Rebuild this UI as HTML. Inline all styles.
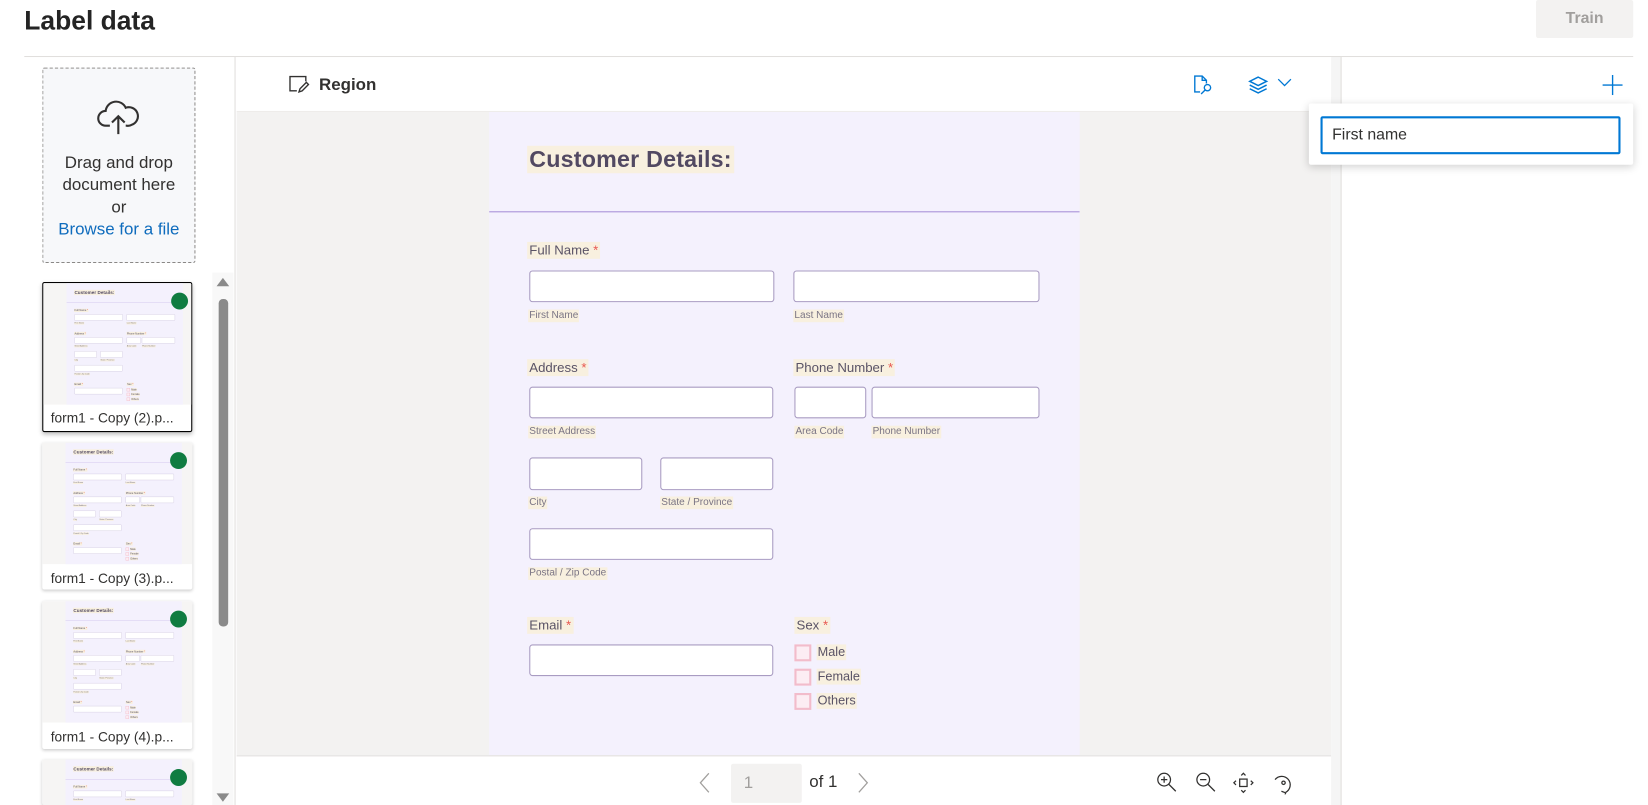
<!DOCTYPE html>
<html><head><meta charset="utf-8"><style>
*{box-sizing:border-box;margin:0;padding:0}
html,body{width:1648px;height:805px;overflow:hidden;background:#fff;font-family:"Liberation Sans",sans-serif;color:#323130}
#w{position:absolute;left:0;top:0;width:1560px;height:762px;transform:scale(1.0564);transform-origin:0 0;overflow:hidden}
.a{position:absolute}
.form{position:absolute;width:559px;height:609px;background:#f4f1fd;overflow:hidden}
.form .t{position:absolute;left:36px;top:32px;font-size:22px;font-weight:bold;color:#524962;background:#f8f0df;padding:0 2px;letter-spacing:.2px}
.form .ln{position:absolute;left:0;right:0;top:94px;height:1px;background:#a78fd8}
.form .lb{position:absolute;font-size:12.5px;color:#5a5366;background:#f8f0df;padding:0 2px;line-height:16px}
.form .lb b{color:#e8554e;font-weight:normal}
.form .sl{position:absolute;font-size:9.5px;color:#7a7484;background:#f8f0df;padding:0 1px;line-height:12px}
.form .in{position:absolute;background:#fff;border:1px solid #a99cc2;border-radius:3px}
.form .cb{position:absolute;width:16px;height:16px;border:2px solid #f2bccb;background:#fcedf3}
.form .cl{position:absolute;font-size:12px;color:#5a5366;background:#f8f0df;line-height:15px;padding:0 1px}
.card{position:absolute;left:40px;width:142px;background:#fff;border-radius:2px;box-shadow:0 1px 3px rgba(0,0,0,.2);overflow:hidden}
.card .img{position:absolute;left:0;top:0;width:142px;height:115px;background:#f6f5f4;overflow:hidden}
.card .mp{position:absolute;left:22px;top:0;width:559px;height:609px;transform:scale(.197);transform-origin:0 0}
.card .dot{position:absolute;left:121px;top:9px;width:16px;height:16px;border-radius:50%;background:#107c41}
.card .nm{position:absolute;left:8px;top:121px;font-size:13px;color:#323130;white-space:nowrap}
</style></head><body><div id="w">

<div class="a" style="left:23px;top:6px;font-size:25px;font-weight:bold;color:#242424">Label data</div>
<div class="a" style="left:1454px;top:0;width:92px;height:36px;background:#f3f2f1;border-radius:2px;color:#a19f9d;font-size:15px;font-weight:bold;text-align:center;line-height:36px">Train</div>
<div class="a" style="left:23px;top:53px;width:1523px;height:1px;background:#e1dfdd"></div>

<div class="a" style="left:40px;top:64px;width:145px;height:185px;border:1px dashed #8a8886;background:#f7f8fa;border-radius:2px;text-align:center">
<svg class="a" style="left:50px;top:30px" width="42" height="34" viewBox="0 0 42 34" fill="none" stroke="#323130" stroke-width="2"><path d="M13 24H9a7 7 0 0 1 0-14 10 10 0 0 1 19-3 8 8 0 0 1 6 16 7 7 0 0 1-5 1h-1"/><path d="M21 32V16M15 21l6-6 6 6"/></svg>
<div class="a" style="left:0;right:0;top:79px;font-size:16px;line-height:21px;color:#323130">Drag and drop<br>document here<br>or<br><span style="color:#0f6cbd">Browse for a file</span></div>
</div>

<div class="a" style="left:201px;top:258px;width:20px;height:504px;background:#f8f8f8"></div>
<div class="a" style="left:205px;top:263px;width:0;height:0;border-left:6px solid transparent;border-right:6px solid transparent;border-bottom:8px solid #8a8a8a"></div>
<div class="a" style="left:207px;top:283px;width:9px;height:310px;background:#8a8a8a;border-radius:4px"></div>
<div class="a" style="left:205px;top:751px;width:0;height:0;border-left:6px solid transparent;border-right:6px solid transparent;border-top:8px solid #8a8a8a"></div>
<div class="a" style="left:222px;top:54px;width:1px;height:708px;background:#e1dfdd"></div>

<div class="card" style="top:267px;height:142px;border:1px solid #000;box-shadow:0 2px 4px rgba(0,0,0,.25)"><div class="img"><div class="mp"><div class="form" style="left:0;top:0">FORMX</div></div><div class="dot"></div></div><div class="nm" style="top:120px;left:7px">form1 - Copy (2).p...</div></div>
<div class="card" style="top:419px;height:139px"><div class="img"><div class="mp"><div class="form" style="left:0;top:0">FORMX</div></div><div class="dot"></div></div><div class="nm">form1 - Copy (3).p...</div></div>
<div class="card" style="top:569px;height:140px"><div class="img"><div class="mp"><div class="form" style="left:0;top:0">FORMX</div></div><div class="dot"></div></div><div class="nm">form1 - Copy (4).p...</div></div>
<div class="card" style="top:719px;height:43px"><div class="img"><div class="mp"><div class="form" style="left:0;top:0">FORMX</div></div><div class="dot"></div></div></div>

<div class="a" style="left:224px;top:105px;width:1036px;height:1px;background:#edebe9"></div>
<svg class="a" style="left:273px;top:71px" width="20" height="18" viewBox="0 0 20 18" fill="none" stroke="#323130" stroke-width="1.3"><path d="M8 15H1.5V1.5h15V6"/><path d="M10 16l1-3 6-6 2 2-6 6z"/></svg>
<div class="a" style="left:302px;top:72px;font-size:16px;font-weight:bold;color:#323130">Region</div>
<svg class="a" style="left:1129px;top:70px" width="20" height="20" viewBox="0 0 20 20" fill="none" stroke="#0078d4" stroke-width="1.3"><path d="M7 17H2V2h7l4 4v3"/><path d="M9 2v4h4"/><circle cx="14" cy="13" r="3"/><path d="M12 15l-4 4"/></svg>
<svg class="a" style="left:1181px;top:70px" width="20" height="20" viewBox="0 0 20 20" fill="none" stroke="#0078d4" stroke-width="1.4"><path d="M10 3l8 4-8 4-8-4z"/><path d="M2 10.5l8 4 8-4"/><path d="M2 14l8 4 8-4"/></svg>
<svg class="a" style="left:1209px;top:73px" width="14" height="10" viewBox="0 0 14 10" fill="none" stroke="#0078d4" stroke-width="1.2"><path d="M1 2l6 6 6-6"/></svg>

<div class="a" style="left:224px;top:106px;width:1036px;height:609px;background:#f3f2f1"></div>
<div class="form" style="left:463px;top:106px">
<div class="t">Customer Details:</div>
<div class="ln"></div>
<div class="lb" style="left:36px;top:123px">Full Name <b>*</b></div>
<div class="in" style="left:38px;top:150px;width:232px;height:30px"></div>
<div class="in" style="left:288px;top:150px;width:233px;height:30px"></div>
<div class="sl" style="left:37px;top:187px">First Name</div>
<div class="sl" style="left:288px;top:187px">Last Name</div>
<div class="lb" style="left:36px;top:234px">Address <b>*</b></div>
<div class="lb" style="left:288px;top:234px">Phone Number <b>*</b></div>
<div class="in" style="left:38px;top:260px;width:231px;height:30px"></div>
<div class="in" style="left:289px;top:260px;width:68px;height:30px"></div>
<div class="in" style="left:362px;top:260px;width:159px;height:30px"></div>
<div class="sl" style="left:37px;top:297px">Street Address</div>
<div class="sl" style="left:289px;top:297px">Area Code</div>
<div class="sl" style="left:362px;top:297px">Phone Number</div>
<div class="in" style="left:38px;top:327px;width:107px;height:31px"></div>
<div class="in" style="left:162px;top:327px;width:107px;height:31px"></div>
<div class="sl" style="left:37px;top:364px">City</div>
<div class="sl" style="left:162px;top:364px">State / Province</div>
<div class="in" style="left:38px;top:394px;width:231px;height:30px"></div>
<div class="sl" style="left:37px;top:431px">Postal / Zip Code</div>
<div class="lb" style="left:36px;top:478px">Email <b>*</b></div>
<div class="lb" style="left:289px;top:478px">Sex <b>*</b></div>
<div class="in" style="left:38px;top:504px;width:231px;height:30px"></div>
<div class="cb" style="left:289px;top:504px"></div><div class="cl" style="left:310px;top:504px">Male</div>
<div class="cb" style="left:289px;top:527px"></div><div class="cl" style="left:310px;top:527px">Female</div>
<div class="cb" style="left:289px;top:550px"></div><div class="cl" style="left:310px;top:550px">Others</div>
</div>

<div class="a" style="left:224px;top:715px;width:1036px;height:1px;background:#e1dfdd"></div>
<svg class="a" style="left:660px;top:731px" width="14" height="20" viewBox="0 0 14 20" fill="none" stroke="#a19f9d" stroke-width="1.2"><path d="M11 1L3 10l8 9"/></svg>
<div class="a" style="left:692px;top:723px;width:67px;height:37px;background:#f3f2f1;border-radius:2px;font-size:16px;color:#a19f9d;line-height:37px;padding-left:12px">1</div>
<div class="a" style="left:766px;top:732px;font-size:16px;color:#323130">of 1</div>
<svg class="a" style="left:810px;top:731px" width="14" height="20" viewBox="0 0 14 20" fill="none" stroke="#a19f9d" stroke-width="1.2"><path d="M3 1l8 9-8 9"/></svg>
<svg class="a" style="left:1094px;top:730px" width="22" height="22" viewBox="0 0 22 22" fill="none" stroke="#323130" stroke-width="1.2"><circle cx="8" cy="8" r="6"/><path d="M12.5 12.5L19 19M8 5v6M5 8h6"/></svg>
<svg class="a" style="left:1131px;top:730px" width="22" height="22" viewBox="0 0 22 22" fill="none" stroke="#323130" stroke-width="1.2"><circle cx="8" cy="8" r="6"/><path d="M12.5 12.5L19 19M5 8h6"/></svg>
<svg class="a" style="left:1166px;top:730px" width="22" height="22" viewBox="0 0 22 22" fill="none" stroke="#323130" stroke-width="1.2"><rect x="7.5" y="7.5" width="7" height="7"/><path d="M9 4l2-2 2 2M9 18l2 2 2-2M4 9l-2 2 2 2M18 9l2 2-2 2"/></svg>
<svg class="a" style="left:1204px;top:730px" width="22" height="22" viewBox="0 0 22 22" fill="none" stroke="#323130" stroke-width="1.2"><path d="M3 8a8 8 0 1 1 10 12"/><path d="M9 19l4 1.5-1 3.5"/><circle cx="11" cy="11" r="1.6"/></svg>

<div class="a" style="left:1260px;top:54px;width:10px;height:708px;background:#f5f5f5;border-right:1px solid #e1dfdd"></div>
<svg class="a" style="left:1517px;top:71px" width="19" height="19" viewBox="0 0 19 19" stroke="#0078d4" stroke-width="1.3"><path d="M9.5 0v19M0 9.5h19"/></svg>
<div class="a" style="left:1239px;top:98px;width:307px;height:58px;background:#fff;border-radius:2px;box-shadow:0 2px 8px rgba(0,0,0,.18)"></div>
<div class="a" style="left:1250px;top:110px;width:284px;height:36px;border:2px solid #0078d4;border-radius:2px;background:#fff;font-size:15px;color:#323130;line-height:32px;padding-left:9px">First name</div>

</div>
<script>
var src=document.querySelector('#w > .form').innerHTML;
document.querySelectorAll('.card .form').forEach(function(f){f.innerHTML=src;});
</script>
</body></html>
